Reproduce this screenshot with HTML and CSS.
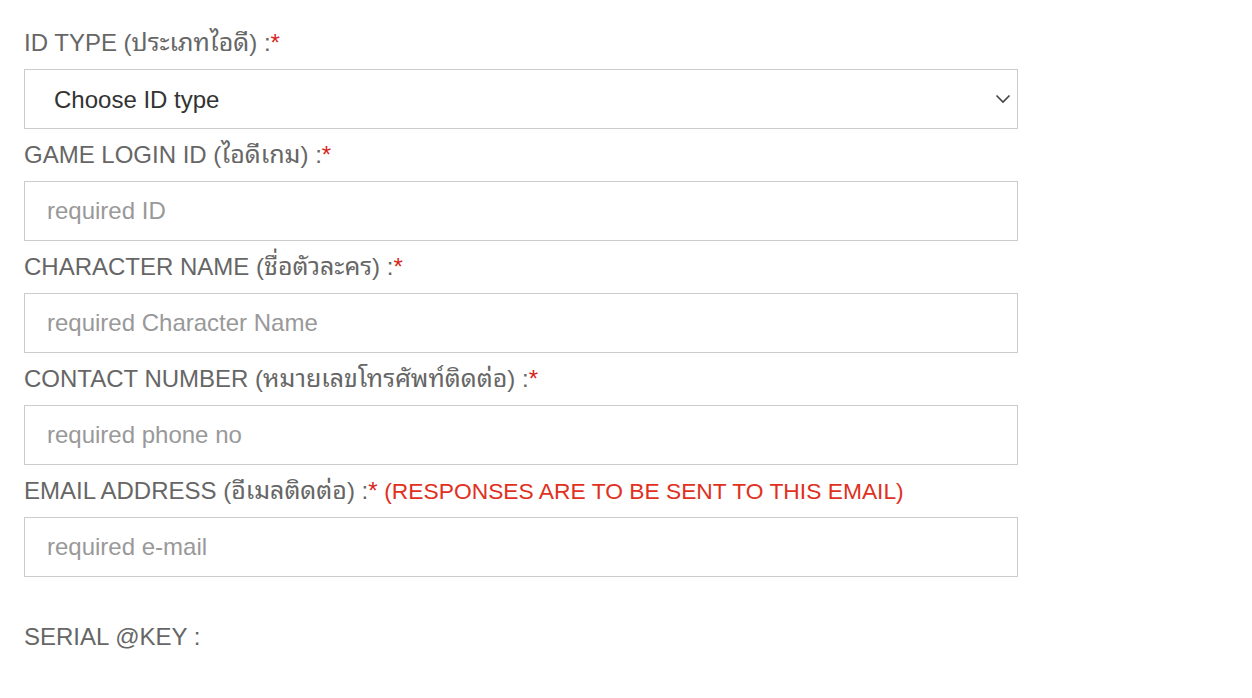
FILE: index.html
```html
<!DOCTYPE html>
<html>
<head>
<meta charset="utf-8">
<link rel="stylesheet" href="styles.css">
</head>
<body>
<form class="form">
  <div class="field">
    <label class="label">ID TYPE (<span class="th">ประเภทไอดี</span>) :<span class="req">*</span></label>
    <div class="select-wrap">
      <select class="control select">
        <option>Choose ID type</option>
      </select>
      <svg class="chev" width="16" height="10" viewBox="0 0 16 10"><path d="M1.5 1.5 L8 8 L14.5 1.5" fill="none" stroke="#444" stroke-width="1.6"/></svg>
    </div>
  </div>
  <div class="field">
    <label class="label">GAME LOGIN ID (<span class="th">ไอดีเกม</span>) :<span class="req">*</span></label>
    <input class="control" placeholder="required ID">
  </div>
  <div class="field">
    <label class="label">CHARACTER NAME (<span class="th">ชื่อตัวละคร</span>) :<span class="req">*</span></label>
    <input class="control" placeholder="required Character Name">
  </div>
  <div class="field">
    <label class="label">CONTACT NUMBER (<span class="th">หมายเลขโทรศัพท์ติดต่อ</span>) :<span class="req">*</span></label>
    <input class="control" placeholder="required phone no">
  </div>
  <div class="field">
    <label class="label">EMAIL ADDRESS (<span class="th">อีเมลติดต่อ</span>) :<span class="req">*</span> <span class="note">(RESPONSES ARE TO BE SENT TO THIS EMAIL)</span></label>
    <input class="control" placeholder="required e-mail">
  </div>
  <div class="field serial">
    <label class="label">SERIAL @KEY :</label>
  </div>
</form>
</body>
</html>
```
FILE: styles.css
```css
html, body {
  margin: 0;
  padding: 0;
  background: #fff;
}
body {
  font-family: "Liberation Sans", Arial, "Noto Sans Thai Looped", "Tlwg Typo", "Loma", "Garuda", "Noto Sans Thai", sans-serif;
}
.form {
  padding: 17px 0 0 24px;
  width: 994px;
}
.field {
  display: flex;
  flex-direction: column;
}
.label {
  display: block;
  height: 52px;
  line-height: 52px;
  font-size: 24px;
  color: #666;
  white-space: nowrap;
}
.th {
  font-size: 25px;
  line-height: 1;
}
.req {
  color: #d9261c;
}
.note {
  color: #e0301e;
  font-size: 22.8px;
  line-height: 1;
}
.control {
  box-sizing: border-box;
  width: 994px;
  height: 60px;
  border: 1px solid #ccc;
  border-radius: 0;
  background: #fff;
  font-family: "Liberation Sans", Arial, sans-serif;
  font-size: 24px;
  color: #333;
  padding: 0 22px;
  margin: 0;
  outline: none;
}
.control::placeholder {
  color: #999;
}
.select-wrap {
  position: relative;
  width: 994px;
}
.select {
  appearance: none;
  -webkit-appearance: none;
  padding-left: 29px;
  color: #333;
}
.chev {
  position: absolute;
  right: 7px;
  top: 25px;
  pointer-events: none;
}
.serial {
  margin-top: 34px;
}
```
